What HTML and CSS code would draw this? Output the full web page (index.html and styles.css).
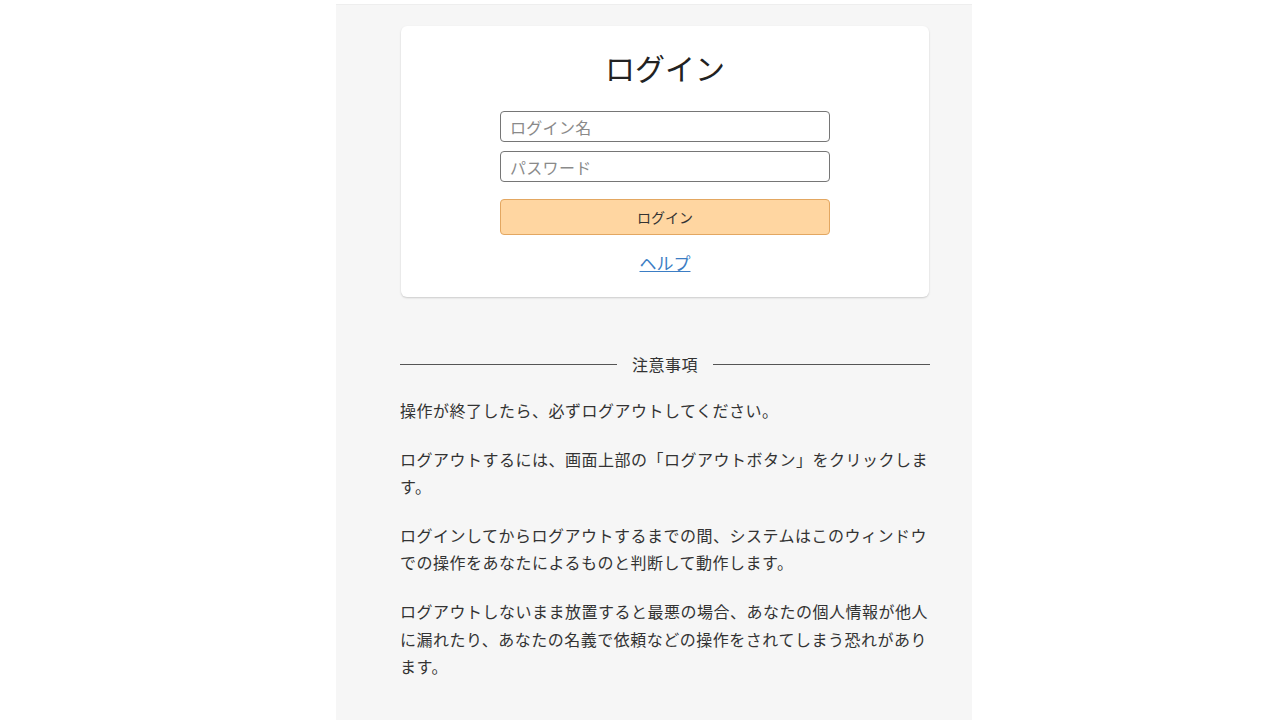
FILE: index.html
```html
<!DOCTYPE html>
<html lang="ja">
<head>
<meta charset="utf-8">
<title>ログイン</title>
<link rel="stylesheet" href="styles.css">
</head>
<body>
<div class="page">
  <div class="column">
    <form class="card">
      <h1 class="title">ログイン</h1>
      <div class="fields">
        <input class="field" type="text" placeholder="ログイン名">
        <input class="field" type="password" placeholder="パスワード">
      </div>
      <button class="btn" type="button">ログイン</button>
      <a class="help" href="#">ヘルプ</a>
    </form>

    <section class="notes">
      <h2 class="notes-title"><span>注意事項</span></h2>
      <p>操作が終了したら、必ずログアウトしてください。</p>
      <p>ログアウトするには、画面上部の「ログアウトボタン」をクリックします。</p>
      <p>ログインしてからログアウトするまでの間、システムはこのウィンドウでの操作をあなたによるものと判断して動作します。</p>
      <p>ログアウトしないまま放置すると最悪の場合、あなたの個人情報が他人に漏れたり、あなたの名義で依頼などの操作をされてしまう恐れがあります。</p>
    </section>
  </div>
</div>
</body>
</html>
```

FILE: styles.css
```css
html, body {
  margin: 0;
  padding: 0;
  background: #ffffff;
  font-family: "Noto Sans CJK JP", "Noto Sans", sans-serif;
  color: #333333;
}

.page {
  width: 636px;
  margin: 4px 0 0 calc(50% - 304px);
  min-height: 716px;
  background: #f6f6f6;
  border-top: 1px solid #eeeeee;
  box-sizing: border-box;
  padding: 21px 42px 40px 64px;
}

.column {
  width: 530px;
}

.card {
  margin: 0 1px;
  background: #ffffff;
  border-radius: 6px;
  box-shadow: 0 1px 2px rgba(0, 0, 0, 0.18);
  padding: 20px 0 22px;
  display: flex;
  flex-direction: column;
  align-items: center;
}

.title {
  margin: 0;
  font-size: 30px;
  line-height: 42px;
  font-weight: 400;
  color: #222222;
}

.fields {
  margin-top: 23px;
  display: flex;
  flex-direction: column;
  gap: 9px;
}

.field {
  width: 330px;
  height: 31px;
  box-sizing: border-box;
  border: 1px solid #767676;
  border-radius: 4px;
  padding: 0 9px;
  font-family: inherit;
  font-size: 16px;
  letter-spacing: 0.3px;
  color: #333333;
  background: #ffffff;
}

.field::placeholder {
  color: #8a8a8a;
}

.btn {
  margin-top: 17px;
  width: 330px;
  height: 36px;
  box-sizing: border-box;
  background: #ffd6a1;
  border: 1px solid #e3a761;
  border-radius: 4px;
  font-family: inherit;
  font-size: 14px;
  color: #333333;
}

.help {
  margin-top: 16px;
  font-size: 17px;
  line-height: 24px;
  color: #3b7dc4;
  text-decoration: underline;
}

.notes {
  margin-top: 53px;
}

.notes-title {
  margin: 0;
  display: flex;
  align-items: center;
  gap: 15px;
  font-size: 16px;
  line-height: 28px;
  font-weight: 400;
  letter-spacing: 0.5px;
  color: #333333;
}

.notes-title::before,
.notes-title::after {
  content: "";
  flex: 1;
  height: 1px;
  background: #555555;
}

.notes p {
  margin: 19px 0 0;
  font-size: 16px;
  line-height: 27.6px;
  letter-spacing: 0.5px;
  color: #333333;
}

.notes p + p {
  margin-top: 21px;
}
```
